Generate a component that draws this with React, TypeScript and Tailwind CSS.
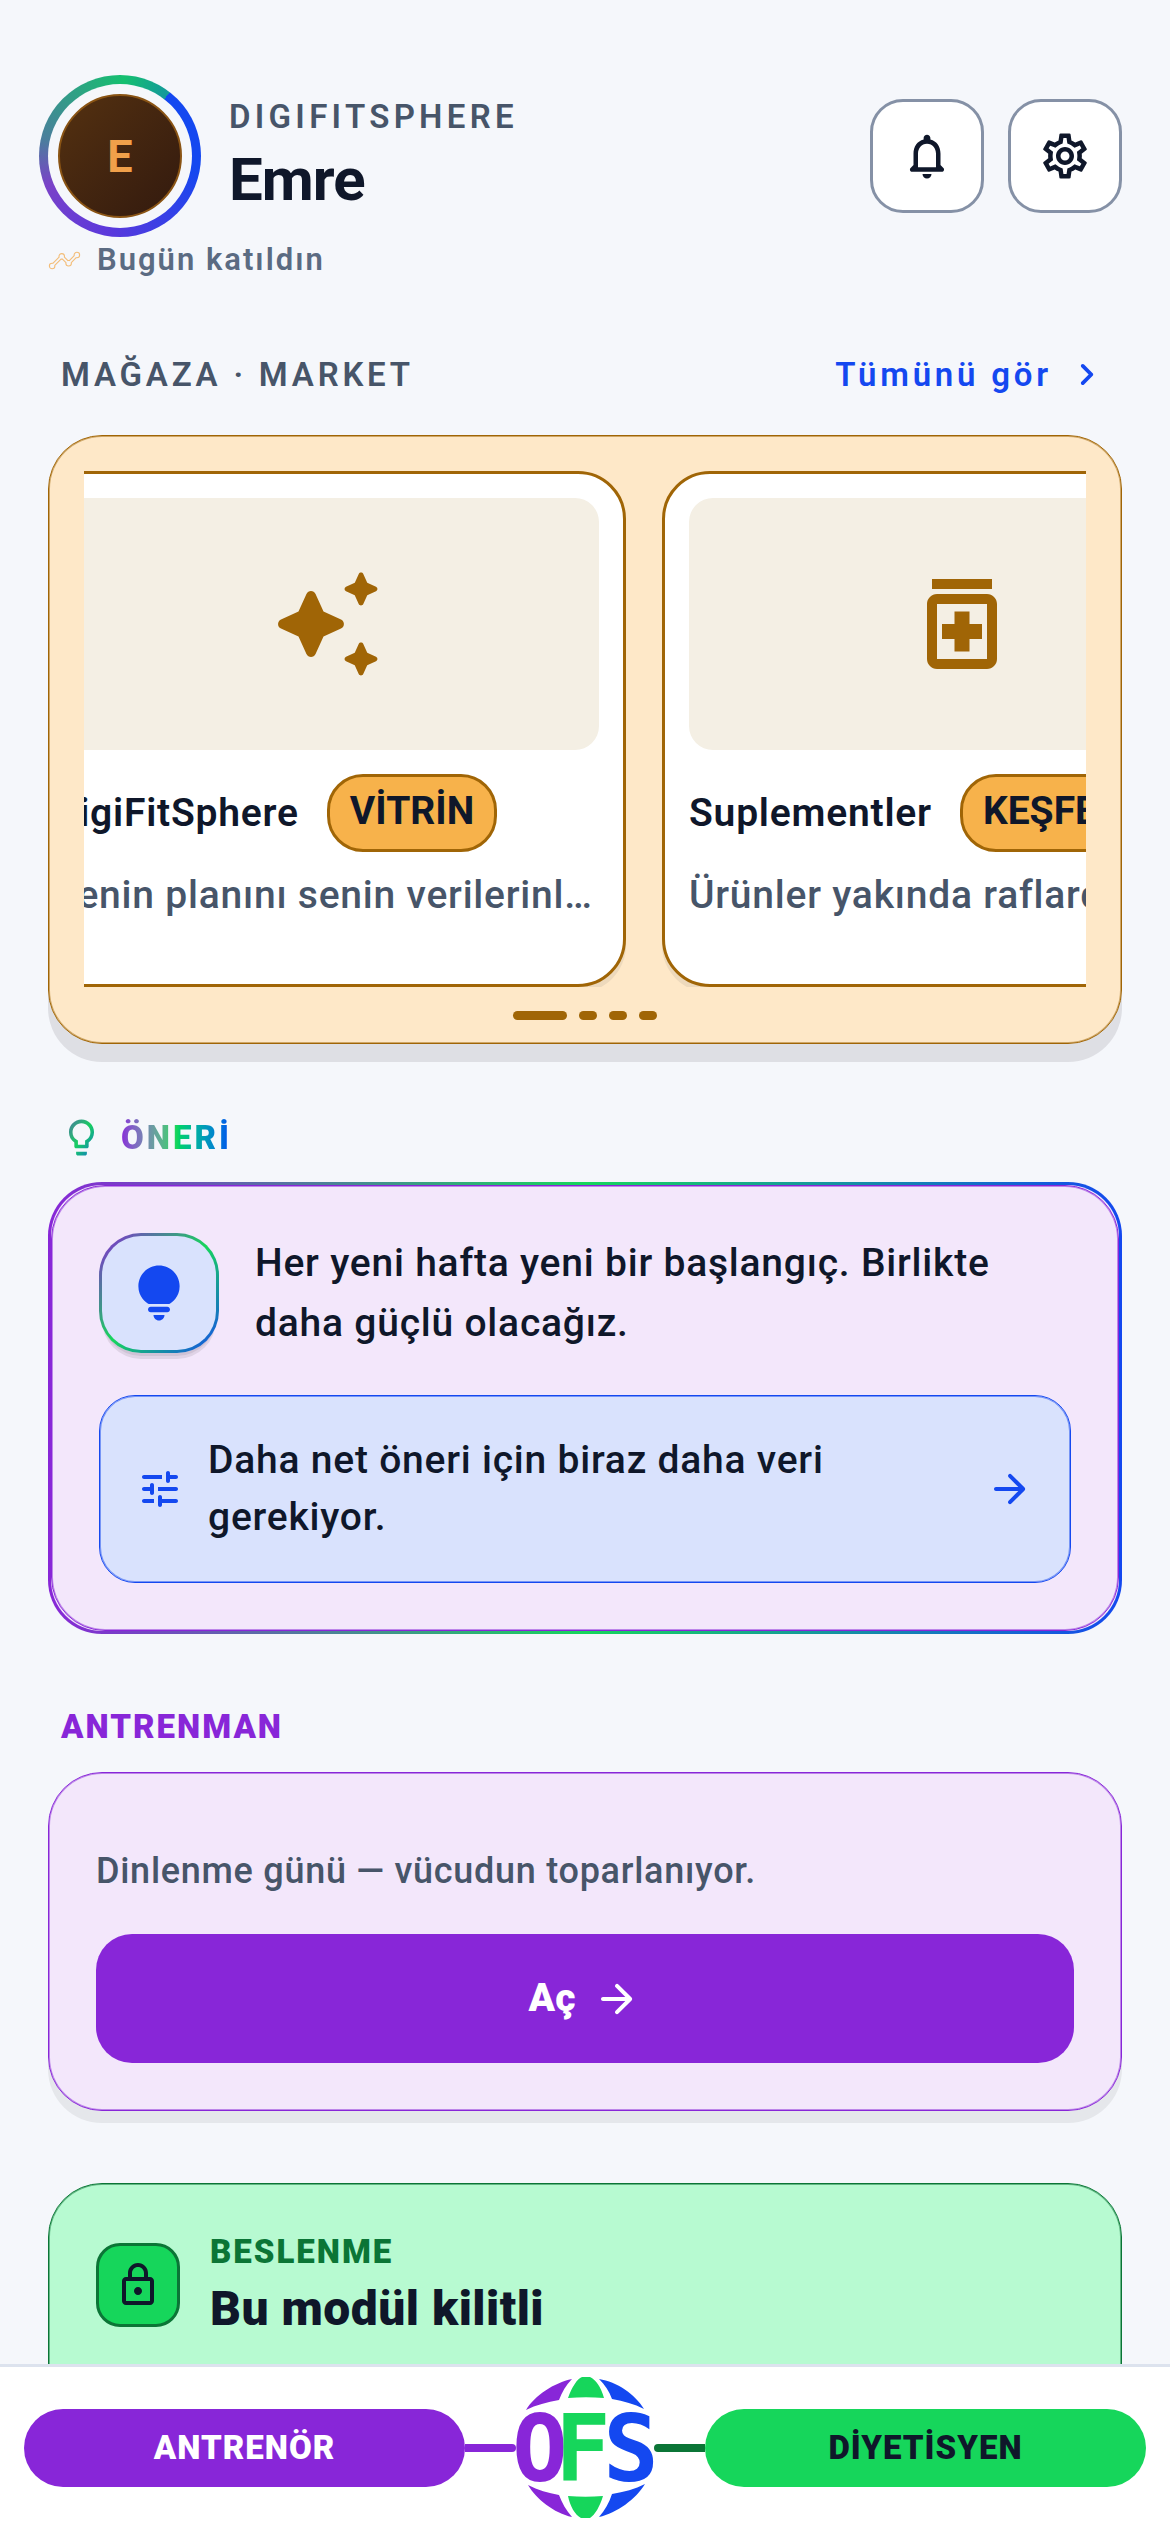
import type { ReactNode } from "react";

type IconProps = { className?: string; children: ReactNode };

function Icon({ className, children }: IconProps) {
  return (
    <svg viewBox="0 0 24 24" fill="currentColor" aria-hidden="true" className={`shrink-0 ${className ?? ""}`}>
      {children}
    </svg>
  );
}

const ArrowRight = ({ className }: { className?: string }) => (
  <Icon className={className}>
    <path d="M5 13h11.17l-4.88 4.88c-.39.39-.39 1.03 0 1.42.39.39 1.02.39 1.41 0l6.59-6.59c.39-.39.39-1.02 0-1.41l-6.58-6.6c-.39-.39-1.02-.39-1.41 0-.39.39-.39 1.02 0 1.41L16.17 11H5c-.55 0-1 .45-1 1s.45 1 1 1z" />
  </Icon>
);

function Avatar() {
  return (
    <div className="grid size-[162px] shrink-0 place-items-center rounded-full bg-[conic-gradient(from_38deg,#1448f0_0deg,#1448f0_60deg,#5a38dc_150deg,#7a42c8_210deg,#4a7f9c_245deg,#15c06f_325deg,#13989c_360deg)]">
      <div className="grid size-36 place-items-center rounded-full bg-[#f5f7fb]">
        <div className="grid size-[124px] place-items-center rounded-full border-2 border-[#8a5414] bg-linear-to-br from-[#543110] to-[#331a0e] text-[45px] leading-none font-bold text-[#f0a04a]">
          E
        </div>
      </div>
    </div>
  );
}

function RoundButton({ label, children }: { label: string; children: ReactNode }) {
  return (
    <button
      type="button"
      aria-label={label}
      className="grid size-[114px] place-items-center rounded-[33px] border-[3px] border-[#8591a6] bg-white text-[#0f172a]"
    >
      {children}
    </button>
  );
}

function ProductCard({ title, badge, text, icon }: { title: string; badge: string; text: string; icon: ReactNode }) {
  return (
    <article className="w-[600px] shrink-0 rounded-[48px] border-[3px] border-[#a06506] bg-white p-6 pb-[60px] shadow-[0_6px_0_rgba(15,23,42,0.07)]">
      <div className="grid h-[252px] place-items-center rounded-3xl bg-[#f4efe4] text-[#a06506]">{icon}</div>
      <div className="mt-6 flex items-center gap-7">
        <h3 className="text-[39px] leading-[57px] font-semibold tracking-[0.02em] text-[#0f172a]">{title}</h3>
        <span className="rounded-[36px] border-[3px] border-[#a06506] bg-[#f7b24b] px-5 pt-[9px] pb-3 text-[39px] leading-[51px] font-bold text-[#0f172a]">
          {badge}
        </span>
      </div>
      <p className="mt-[15px] text-[39px] leading-[57px] font-medium tracking-[0.02em] whitespace-nowrap text-[#475569]">
        {text}
      </p>
    </article>
  );
}

function Logo() {
  return (
    <svg viewBox="0 0 138 142" className="h-[142px] w-[138px] shrink-0" role="img" aria-label="OFS">
      <g fill="#8826d8">
        <path d="M56 2C38 6 19 18 10 33c10-5 21-8 33-10C46 15 50 8 56 2Z" />
        <path d="M56 140C38 136 20 122 12 108c10 5 20 8 31 10 3 8 7 15 13 22Z" />
      </g>
      <g fill="#16d65b">
        <path d="M52 21C56 10 61 2 66 0h8c6 3 11 10 14 21-12-1-24-1-36 0Z" />
        <path d="M52 119c12 1 23 1 35 0-3 10-8 19-13 22h-9c-6-3-11-12-13-22Z" />
      </g>
      <g fill="#1448f0">
        <path d="M83 2c18 3 36 15 45 30-10-5-20-8-32-10C93 14 89 8 83 2Z" />
        <path d="M83 140c18-4 37-18 46-33-10 5-21 8-33 10-3 9-7 16-13 23Z" />
      </g>
      <g textAnchor="middle" fontWeight="700" fontSize="92" className="font-['DejaVu_Sans_Mono',monospace]">
        <text x="24" y="104" fill="#8826d8">O</text>
        <text x="67" y="104" fill="#16d65b">F</text>
        <text x="115" y="104" fill="#1448f0">S</text>
      </g>
    </svg>
  );
}

export default function App() {
  return (
    <div className="flex h-screen flex-col bg-[#f5f7fb] font-[Roboto,sans-serif] text-[#0f172a]">
      <main className="min-h-0 flex-1 overflow-y-auto px-12 pt-[75px] [scrollbar-width:none]">
        <header>
          <div className="flex items-center">
            <div className="-ml-[9px] flex flex-1 items-center gap-7">
              <Avatar />
              <div className="flex flex-col gap-1.5">
                <p className="text-[33px] leading-[42px] font-semibold tracking-[0.13em] text-[#475569]">DIGIFITSPHERE</p>
                <h1 className="text-[60px] leading-[72px] font-bold tracking-[-1px]">Emre</h1>
              </div>
            </div>
            <div className="flex gap-6">
              <RoundButton label="Bildirimler">
                <Icon className="size-[54px]">
                  <path d="M19.29 17.29L18 16v-5c0-3.07-1.63-5.64-4.5-6.32V4c0-.83-.67-1.5-1.5-1.5s-1.5.67-1.5 1.5v.68C7.64 5.36 6 7.92 6 11v5l-1.29 1.29c-.63.63-.19 1.71.7 1.71h13.17c.9 0 1.34-1.08.71-1.71zM16 17H8v-6c0-2.48 1.51-4.5 4-4.5s4 2.02 4 4.5v6zm-4 5c1.1 0 2-.9 2-2h-4c0 1.1.89 2 2 2z" />
                </Icon>
              </RoundButton>
              <RoundButton label="Ayarlar">
                <Icon className="size-[54px]">
                  <path d="M19.43 12.98c.04-.32.07-.64.07-.98s-.03-.66-.07-.98l2.11-1.65c.19-.15.24-.42.12-.64l-2-3.46c-.09-.16-.26-.25-.44-.25-.06 0-.12.01-.17.03l-2.49 1c-.52-.4-1.08-.73-1.69-.98l-.38-2.65C14.46 2.18 14.25 2 14 2h-4c-.25 0-.46.18-.49.42l-.38 2.65c-.61.25-1.17.59-1.69.98l-2.49-1c-.06-.02-.12-.03-.18-.03-.17 0-.34.09-.43.25l-2 3.46c-.13.22-.07.49.12.64l2.11 1.65c-.04.32-.07.65-.07.98s.03.66.07.98l-2.11 1.65c-.19.15-.24.42-.12.64l2 3.46c.09.16.26.25.44.25.06 0 .12-.01.17-.03l2.49-1c.52.4 1.08.73 1.69.98l.38 2.65c.03.24.24.42.49.42h4c.25 0 .46-.18.49-.42l.38-2.65c.61-.25 1.17-.59 1.69-.98l2.49 1c.06.02.12.03.18.03.17 0 .34-.09.43-.25l2-3.46c.12-.22.07-.49-.12-.64l-2.11-1.65zm-1.98-1.71c.04.31.05.52.05.73 0 .21-.02.43-.05.73l-.14 1.13.89.7 1.08.84-.7 1.21-1.27-.51-1.04-.42-.9.68c-.43.32-.84.56-1.25.73l-1.06.43-.16 1.13-.2 1.35h-1.4l-.19-1.35-.16-1.13-1.06-.43c-.43-.18-.83-.41-1.23-.71l-.91-.7-1.06.43-1.27.51-.7-1.21 1.08-.84.89-.7-.14-1.13c-.03-.31-.05-.54-.05-.74s.02-.43.05-.73l.14-1.13-.89-.7-1.08-.84.7-1.21 1.27.51 1.04.42.9-.68c.43-.32.84-.56 1.25-.73l1.06-.43.16-1.13.2-1.35h1.39l.19 1.35.16 1.13 1.06.43c.43.18.83.41 1.23.71l.91.7 1.06-.43 1.27-.51.7 1.21-1.07.85-.89.7.14 1.13zM12 8c-2.21 0-4 1.79-4 4s1.79 4 4 4 4-1.79 4-4-1.79-4-4-4zm0 6c-1.1 0-2-.9-2-2s.9-2 2-2 2 .9 2 2-.9 2-2 2z" />
                </Icon>
              </RoundButton>
            </div>
          </div>
          <div className="mt-[5px] flex items-center gap-4">
            <svg viewBox="0 0 24 24" fill="none" stroke="#f3bd78" strokeWidth="0.8" aria-hidden="true" className="size-[33px] shrink-0">
              <path d="M23 8c0 1.1-.9 2-2 2-.18 0-.35-.02-.51-.07l-3.56 3.55c.05.16.07.34.07.52 0 1.1-.9 2-2 2s-2-.9-2-2c0-.18.02-.36.07-.52l-2.55-2.55c-.16.05-.34.07-.52.07s-.36-.02-.52-.07l-4.55 4.56c.05.16.07.33.07.51 0 1.1-.9 2-2 2s-2-.9-2-2 .9-2 2-2c.18 0 .35.02.51.07l4.56-4.55C8.02 9.36 8 9.18 8 9c0-1.1.9-2 2-2s2 .9 2 2c0 .18-.02.36-.07.52l2.55 2.55c.16-.05.34-.07.52-.07s.36.02.52.07l3.55-3.56C19.02 8.35 19 8.18 19 8c0-1.1.9-2 2-2s2 .9 2 2z" />
            </svg>
            <p className="text-[31px] leading-9 font-semibold tracking-[2px] text-[#5b6b82]">Bugün katıldın</p>
          </div>
        </header>

        <section className="mt-[72px]">
          <div className="flex h-[49px] items-center justify-between px-[13px]">
            <h2 className="text-[33px] leading-[42px] font-semibold tracking-[0.115em] text-[#475569]">MAĞAZA · MARKET</h2>
            <a href="#market" className="flex items-center gap-3 text-[33px] leading-[42px] font-semibold tracking-[0.115em] text-[#1448f0]">
              Tümünü gör
              <Icon className="size-[45px]">
                <path d="M9.29 6.71c-.39.39-.39 1.02 0 1.41L13.17 12l-3.88 3.88c-.39.39-.39 1.02 0 1.41.39.39 1.02.39 1.41 0l4.59-4.59c.39-.39.39-1.02 0-1.41L10.7 6.7c-.38-.38-1.02-.38-1.41.01z" />
              </Icon>
            </a>
          </div>
          <div className="mt-9 rounded-[54px] border border-[#a06506] bg-[#fee8c8] px-[35px] pt-[35px] pb-[23px] shadow-[0_18px_0_#dedfe4,inset_0_0_0_1px_rgba(160,101,6,0.5)]">
            <div className="overflow-hidden">
              <div className="-ml-[58px] flex gap-9">
                <ProductCard
                  title="DigiFitSphere"
                  badge="VİTRİN"
                  text="Senin planını senin verilerinl…"
                  icon={
                    <Icon className="size-[120px]">
                      <path d="M19.46 8l.79-1.75L22 5.46c.39-.18.39-.73 0-.91l-1.75-.79L19.46 2c-.18-.39-.73-.39-.91 0l-.79 1.75-1.76.79c-.39.18-.39.73 0 .91l1.75.79.79 1.76c.18.39.74.39.92 0zM11.5 9.5L9.91 6c-.35-.78-1.47-.78-1.82 0L6.5 9.5 3 11.09c-.78.36-.78 1.47 0 1.82l3.5 1.59L8.09 18c.36.78 1.47.78 1.82 0l1.59-3.5 3.5-1.59c.78-.36.78-1.47 0-1.82L11.5 9.5zm7.04 6.5l-.79 1.75-1.75.79c-.39.18-.39.73 0 .91l1.75.79.79 1.76c.18.39.73.39.91 0l.79-1.75 1.76-.79c.39-.18.39-.73 0-.91l-1.75-.79-.79-1.76c-.18-.39-.74-.39-.92 0z" />
                    </Icon>
                  }
                />
                <ProductCard
                  title="Suplementler"
                  badge="KEŞFET"
                  text="Ürünler yakında raflarda…"
                  icon={
                    <Icon className="size-[120px]">
                      <path d="M6 3h12v2H6zM17 6H7c-1.1 0-2 .9-2 2v11c0 1.1.9 2 2 2h10c1.1 0 2-.9 2-2V8c0-1.1-.9-2-2-2zm0 13H7V8h10v11zM8 12h2.5V9.5h3V12H16v3h-2.5v2.5h-3V15H8z" />
                    </Icon>
                  }
                />
              </div>
            </div>
            <div className="mt-6 flex justify-center gap-3">
              <span className="h-[9px] w-[54px] rounded-full bg-[#a06506]" />
              <span className="h-[9px] w-[18px] rounded-full bg-[#a06506]" />
              <span className="h-[9px] w-[18px] rounded-full bg-[#a06506]" />
              <span className="h-[9px] w-[18px] rounded-full bg-[#a06506]" />
            </div>
          </div>
        </section>

        <section className="mt-[72px]">
          <div className="flex items-center gap-[18px] px-3">
            <svg viewBox="0 0 24 24" aria-hidden="true" className="size-[43px] shrink-0">
              <defs>
                <linearGradient id="bulb" x1="0" y1="0" x2="1" y2="1">
                  <stop offset="0" stopColor="#6a58b4" />
                  <stop offset="0.12" stopColor="#3f8f90" />
                  <stop offset="0.5" stopColor="#16cf60" />
                  <stop offset="0.9" stopColor="#1286b8" />
                </linearGradient>
              </defs>
              <path
                fill="url(#bulb)"
                d="M9 21c0 .55.45 1 1 1h4c.55 0 1-.45 1-1v-1H9v1zm3-19C8.14 2 5 5.14 5 9c0 2.38 1.19 4.47 3 5.74V17c0 .55.45 1 1 1h6c.55 0 1-.45 1-1v-2.26c1.81-1.27 3-3.36 3-5.74 0-3.86-3.14-7-7-7zm2.85 11.1l-.85.6V16h-4v-2.3l-.85-.6C7.8 12.16 7 10.63 7 9c0-2.76 2.24-5 5-5s5 2.24 5 5c0 1.63-.8 3.16-2.15 4.1z"
              />
            </svg>
            <h2 className="bg-linear-to-r from-[#8826d8] via-[#16d65b] to-[#1448f0] bg-clip-text text-[33px] leading-[42px] font-black tracking-[3px] text-transparent">
              ÖNERİ
            </h2>
          </div>
          <div className="mt-[23px] rounded-[54px] border-[3px] border-transparent [background:linear-gradient(#f3e7fb,#f3e7fb)_padding-box,linear-gradient(90deg,#8826d8,#16d65b,#1448f0)_border-box]">
            <div className="rounded-[54px] border border-[#8826d8] p-[47px] shadow-[inset_0_0_0_1px_rgba(136,38,216,0.5)]">
              <div className="flex items-center gap-9">
                <div className="grid size-[120px] shrink-0 place-items-center rounded-[42px] border-[3px] border-transparent text-[#1448f0] shadow-[0_6px_0_-3px_#cfc3d6,0_9px_0_-3px_#dfd3e6] [background:linear-gradient(#d9e2fd,#d9e2fd)_padding-box,linear-gradient(135deg,#8826d8,#16d65b,#1448f0)_border-box]">
                  <Icon className="size-[66px]">
                    <path d="M12 22c1.1 0 2-.9 2-2h-4c0 1.1.9 2 2 2zM9 19h6c.55 0 1-.45 1-1s-.45-1-1-1H9c-.55 0-1 .45-1 1s.45 1 1 1zM12 2C7.86 2 4.5 5.36 4.5 9.5c0 3.82 2.66 5.86 3.77 6.5h7.46c1.11-.64 3.77-2.68 3.77-6.5C19.5 5.36 16.14 2 12 2z" />
                  </Icon>
                </div>
                <p className="pr-9 text-[39px] leading-[60px] font-medium tracking-[0.02em]">
                  Her yeni hafta yeni bir başlangıç. Birlikte daha güçlü olacağız.
                </p>
              </div>
              <button
                type="button"
                className="mt-[42px] flex w-full items-center rounded-[36px] border border-[#1448f0] bg-[#d9e2fd] p-9 text-left text-[#1448f0] shadow-[inset_0_0_0_1px_rgba(20,72,240,0.5)]"
              >
                <Icon className="size-12">
                  <path d="M3 18c0 .55.45 1 1 1h5v-2H4c-.55 0-1 .45-1 1zM3 6c0 .55.45 1 1 1h9V5H4c-.55 0-1 .45-1 1zm10 14v-1h7c.55 0 1-.45 1-1s-.45-1-1-1h-7v-1c0-.55-.45-1-1-1s-1 .45-1 1v4c0 .55.45 1 1 1s1-.45 1-1zM7 10v1H4c-.55 0-1 .45-1 1s.45 1 1 1h3v1c0 .55.45 1 1 1s1-.45 1-1v-4c0-.55-.45-1-1-1s-1 .45-1 1zm14 2c0-.55-.45-1-1-1h-9v2h9c.55 0 1-.45 1-1zm-5-3c.55 0 1-.45 1-1V7h3c.55 0 1-.45 1-1s-.45-1-1-1h-3V4c0-.55-.45-1-1-1s-1 .45-1 1v4c0 .55.45 1 1 1z" />
                </Icon>
                <span className="ml-6 flex-1 pr-12 text-[39px] leading-[57px] font-medium tracking-[0.02em] text-[#0f172a]">
                  Daha net öneri için biraz daha veri gerekiyor.
                </span>
                <ArrowRight className="size-12" />
              </button>
            </div>
          </div>
        </section>

        <section className="mt-[72px]">
          <h2 className="px-[13px] text-[33px] leading-[42px] font-black tracking-[2px] text-[#8826d8]">ANTRENMAN</h2>
          <div className="mt-6 rounded-[54px] border border-[#8826d8] bg-[#f3e7fb] px-[47px] pt-[71px] pb-[47px] shadow-[0_12px_0_#e5e7eb,inset_0_0_0_1px_rgba(136,38,216,0.5)]">
            <p className="text-[36px] leading-[54px] font-medium tracking-[0.02em] text-[#475569]">
              Dinlenme günü — vücudun toparlanıyor.
            </p>
            <button
              type="button"
              className="mt-9 flex h-[129px] w-full items-center justify-center gap-[18px] rounded-[36px] bg-[#8826d8] text-[39px] leading-[57px] font-black text-white"
            >
              Aç
              <ArrowRight className="size-12" />
            </button>
          </div>
        </section>

        <section className="mt-[72px] rounded-[54px] border border-[#0b7536] bg-[#b7fad1] p-[47px] pb-24 shadow-[inset_0_0_0_1px_rgba(11,117,54,0.5)]">
          <div className="flex items-center gap-[30px]">
            <div className="grid size-[84px] shrink-0 place-items-center rounded-3xl border-[3px] border-[#0b7536] bg-[#16d65b]">
              <Icon className="size-12">
                <path d="M18 8h-1V6c0-2.76-2.24-5-5-5S7 3.24 7 6v2H6c-1.1 0-2 .9-2 2v10c0 1.1.9 2 2 2h12c1.1 0 2-.9 2-2V10c0-1.1-.9-2-2-2zM9 6c0-1.66 1.34-3 3-3s3 1.34 3 3v2H9V6zm9 14H6V10h12v10zm-6-3c1.1 0 2-.9 2-2s-.9-2-2-2-2 .9-2 2 .9 2 2 2z" />
              </Icon>
            </div>
            <div className="flex flex-col gap-1.5">
              <p className="text-[33px] leading-[42px] font-black tracking-[2px] text-[#0b7536]">BESLENME</p>
              <h2 className="text-[48px] leading-[60px] font-black tracking-[0.01em]">Bu modül kilitli</h2>
            </div>
          </div>
        </section>
      </main>

      <nav className="flex h-[168px] shrink-0 items-center border-t-[3px] border-[#dde3ee] bg-white px-6 pb-[3px]">
        <button type="button" className="h-[78px] flex-1 rounded-full bg-[#8826d8] text-[33px] leading-[42px] font-black tracking-[1px] text-white">
          ANTRENÖR
        </button>
        <span className="h-2 w-[51px] rounded-r-full bg-[#8826d8]" />
        <Logo />
        <span className="h-2 w-[51px] rounded-l-full bg-[#0b7536]" />
        <button type="button" className="h-[78px] flex-1 rounded-full bg-[#16d65b] text-[33px] leading-[42px] font-black tracking-[1px] text-[#0f172a]">
          DİYETİSYEN
        </button>
      </nav>
    </div>
  );
}
